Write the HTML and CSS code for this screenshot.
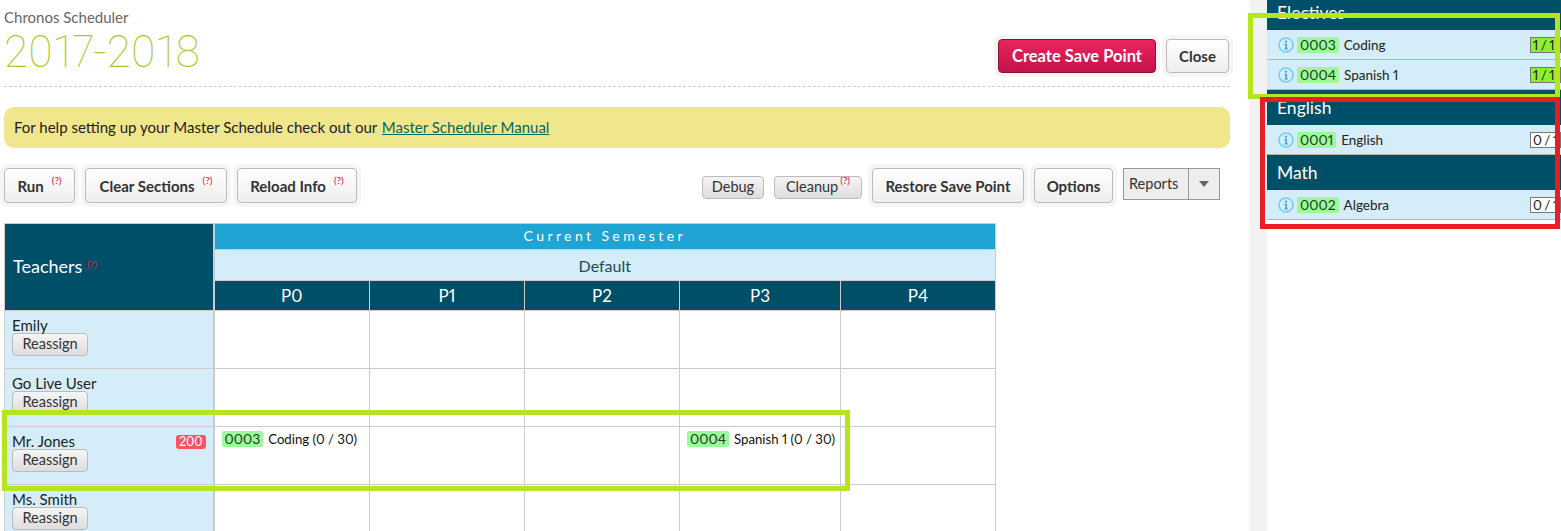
FILE: index.html
```html
<!DOCTYPE html>
<html lang="en">
<head>
<meta charset="utf-8">
<title>Chronos Scheduler</title>
<link rel="stylesheet" href="styles.css">
</head>
<body>
<div class="page">
  <main class="main">
    <header class="head">
      <div class="head-titles">
        <div class="app-name">Chronos Scheduler</div>
        <h1 class="year">2017-2018</h1>
      </div>
      <div class="head-actions">
        <button class="btn btn-primary btn-save">Create Save Point</button>
        <button class="btn btn-close">Close</button>
      </div>
    </header>
    <div class="notice">For help setting up your Master Schedule check out our <a class="notice-link" href="#">Master Scheduler Manual</a></div>
    <div class="toolbar">
      <div class="toolbar-group">
        <button class="btn btn-run">Run<sup class="help">(?)</sup></button>
        <button class="btn btn-clear">Clear Sections<sup class="help">(?)</sup></button>
        <button class="btn btn-reload">Reload Info<sup class="help">(?)</sup></button>
      </div>
      <div class="toolbar-group toolbar-right">
        <button class="mini mini-debug">Debug</button>
        <button class="mini mini-cleanup">Cleanup<sup class="help">(?)</sup></button>
        <button class="btn btn-restore">Restore Save Point</button>
        <button class="btn btn-options">Options</button>
        <div class="split"><span class="split-label">Reports</span><span class="split-arrow"><span class="caret"></span></span></div>
      </div>
    </div>
    <table class="grid">
      <colgroup>
        <col class="c-teacher"><col class="c-p0"><col class="c-p"><col class="c-p"><col class="c-p3"><col class="c-p">
      </colgroup>
      <thead>
        <tr class="r-sem">
          <th class="th-teachers" rowspan="3">Teachers <sup class="help help-lg">(?)</sup></th>
          <th class="th-sem" colspan="5">Current Semester</th>
        </tr>
        <tr class="r-def"><th class="th-def" colspan="5">Default</th></tr>
        <tr class="r-per"><th class="th-per">P0</th><th class="th-per">P1</th><th class="th-per">P2</th><th class="th-per">P3</th><th class="th-per">P4</th></tr>
      </thead>
      <tbody>
        <tr>
          <td class="teacher"><div class="t-name">Emily</div><button class="mini reassign">Reassign</button></td>
          <td></td><td></td><td></td><td></td><td></td>
        </tr>
        <tr>
          <td class="teacher"><div class="t-name">Go Live User</div><button class="mini reassign">Reassign</button></td>
          <td></td><td></td><td></td><td></td><td></td>
        </tr>
        <tr>
          <td class="teacher"><div class="t-name"><span>Mr. Jones</span><span class="count">200</span></div><button class="mini reassign">Reassign</button></td>
          <td class="slot"><span class="code">0003</span><span class="slot-text">Coding (0 / 30)</span></td>
          <td></td><td></td>
          <td class="slot"><span class="code">0004</span><span class="slot-text">Spanish 1 (0 / 30)</span></td>
          <td></td>
        </tr>
        <tr>
          <td class="teacher"><div class="t-name">Ms. Smith</div><button class="mini reassign">Reassign</button></td>
          <td></td><td></td><td></td><td></td><td></td>
        </tr>
      </tbody>
    </table>
  </main>
  <div class="gutter"></div>
  <aside class="side">
    <h2 class="side-head side-head-first">Electives</h2>
    <div class="course">
      <svg class="info" viewBox="0 0 16 16"><circle cx="8" cy="8" r="7" fill="none" stroke="#74ccf8" stroke-width="1.6"/><circle cx="8" cy="4.6" r="1.2" fill="#3fa3e0"/><path d="M6.4 6.8h2.6v4.6h1v1.1H6.3v-1.1h1V7.9h-.9z" fill="#3fa3e0"/></svg>
      <span class="code">0003</span><span class="course-name">Coding</span><span class="tally tally-done">1 / 1</span>
    </div>
    <div class="course">
      <svg class="info" viewBox="0 0 16 16"><circle cx="8" cy="8" r="7" fill="none" stroke="#74ccf8" stroke-width="1.6"/><circle cx="8" cy="4.6" r="1.2" fill="#3fa3e0"/><path d="M6.4 6.8h2.6v4.6h1v1.1H6.3v-1.1h1V7.9h-.9z" fill="#3fa3e0"/></svg>
      <span class="code">0004</span><span class="course-name">Spanish 1</span><span class="tally tally-done">1 / 1</span>
    </div>
    <h2 class="side-head">English</h2>
    <div class="course">
      <svg class="info" viewBox="0 0 16 16"><circle cx="8" cy="8" r="7" fill="none" stroke="#74ccf8" stroke-width="1.6"/><circle cx="8" cy="4.6" r="1.2" fill="#3fa3e0"/><path d="M6.4 6.8h2.6v4.6h1v1.1H6.3v-1.1h1V7.9h-.9z" fill="#3fa3e0"/></svg>
      <span class="code">0001</span><span class="course-name">English</span><span class="tally">0 / 1</span>
    </div>
    <h2 class="side-head">Math</h2>
    <div class="course">
      <svg class="info" viewBox="0 0 16 16"><circle cx="8" cy="8" r="7" fill="none" stroke="#74ccf8" stroke-width="1.6"/><circle cx="8" cy="4.6" r="1.2" fill="#3fa3e0"/><path d="M6.4 6.8h2.6v4.6h1v1.1H6.3v-1.1h1V7.9h-.9z" fill="#3fa3e0"/></svg>
      <span class="code">0002</span><span class="course-name">Algebra</span><span class="tally">0 / 1</span>
    </div>
  </aside>
  <div class="mark mark-row"></div>
  <div class="mark mark-side-green"></div>
  <div class="mark mark-side-red"></div>
</div>
</body>
</html>
```
FILE: styles.css
```css
* { box-sizing: border-box; }
html, body { margin: 0; padding: 0; height: 100%; overflow: hidden; background: #fff; }
body { font-family: Lato, "Open Sans", "Liberation Sans", sans-serif; font-size: 14px; color: #222; font-variant-numeric: proportional-nums; }
.page { position: relative; display: flex; width: 1561px; height: 531px; overflow: hidden; }
.main { width: 1250px; flex: none; padding: 0 20px 0 4px; }
.gutter { width: 17px; flex: none; background: #f2f2f2; }
.side { width: 294px; flex: none; overflow: hidden; }

.head { display: flex; justify-content: space-between; align-items: flex-start; height: 87px; border-bottom: 1px dashed #ccc; padding-top: 9px; }
.app-name { font-size: 15px; line-height: 17px; color: #666; }
.year { margin: 4px 0 0; font-family: Roboto, "Liberation Serif", serif; font-weight: 100; font-size: 44px; line-height: 44px; color: #a9c82a; }
.head-actions { display: flex; gap: 10px; padding-top: 30px; padding-right: 1px; }

.btn { height: 35px; padding: 0; border: 1px solid #bbb; border-radius: 4px; background: linear-gradient(#fff, #eee); box-shadow: 0 0 0 4px #f5f5f5; font-family: Lato, sans-serif; font-size: 15px; font-weight: 700; color: #333; white-space: nowrap; }
.btn-primary { border-color: #8c1238; background: linear-gradient(#e8265e, #c5124c); color: #fff; font-size: 16.5px; }
.btn-save { width: 158px; height: 34px; }
.btn-close { width: 63px; height: 34px; }
.btn-run { width: 71px; }
.btn-clear { width: 142px; }
.btn-reload { width: 120px; }
.btn-restore { width: 152px; }
.btn-options { width: 79px; }

.help { font-size: 10px; font-weight: 400; color: #f00c2c; margin-left: 8px; position: relative; top: -2px; vertical-align: super; line-height: 0; }
.help-lg { margin-left: 0; top: 2px; }

.notice { margin-top: 20px; height: 41px; line-height: 40px; padding-left: 10px; background: #f0e68c; border-radius: 10px; font-size: 15px; color: #222; width: 1226px; }
.notice-link { color: #00695c; margin-left: 1px; }

.toolbar { display: flex; justify-content: space-between; margin-top: 20px; height: 35px; width: 1216px; }
.toolbar-group { display: flex; gap: 10px; }
.toolbar-right { align-items: flex-start; }

.mini { height: 23px; padding: 0 0 2px; border: 1px solid #bbb; border-radius: 4px; background: linear-gradient(#f5f5f5, #ddd); font-family: Lato, sans-serif; font-size: 14.5px; color: #333; white-space: nowrap; }
.mini-debug { width: 62px; margin-top: 8px; }
.mini-cleanup { width: 88px; margin-top: 8px; }
.mini-cleanup .help { margin-left: 2px; }

.split { display: flex; width: 97px; height: 32px; border: 1px solid #999; background: #eee; font-size: 14.5px; }
.split-label { width: 65px; padding-left: 5px; line-height: 29px; border-right: 1px solid #999; color: #333; }
.split-arrow { flex: 1; display: flex; align-items: center; justify-content: center; }
.caret { width: 0; height: 0; border-left: 5px solid transparent; border-right: 5px solid transparent; border-top: 6px solid #666; }

.grid { margin-top: 20px; border-collapse: collapse; table-layout: fixed; width: 992px; }
.c-teacher { width: 209px; }
.c-p0 { width: 156px; }
.c-p { width: 155px; }
.c-p3 { width: 161px; }
.grid th, .grid td { border: 1px solid #ccc; padding: 0; font-weight: 400; }
.r-sem { height: 26px; }
.r-def { height: 31px; }
.r-per { height: 30px; }
.th-teachers { background: #004f68; color: #fff; text-align: left; padding: 0 0 3px 8px !important; font-size: 18px; border-right-width: 2px !important; }
.th-sem { background: #1fa5d4; color: #fff; font-size: 14px; letter-spacing: 3.4px; padding-bottom: 2px !important; }
.th-def { background: #d5edf8; color: #1f4a5c; font-size: 16px; }
.th-per { background: #004f68; color: #fff; font-size: 17px; }
.grid tbody tr { height: 58px; }
.grid td { vertical-align: top; }
.teacher { background: #d5edf8; padding: 6px 7px 0 7px !important; border-right-width: 2px !important; }
.t-name { display: flex; justify-content: space-between; align-items: center; height: 16px; line-height: 16px; font-size: 15px; color: #222; }
.reassign { display: block; width: 76px; }
.count { background: #f9545f; color: #fff; border-radius: 3px; font-size: 12.5px; line-height: 14px; padding: 0 3px; margin-top: 1px; }
.slot { padding: 4px 7px 0 !important; white-space: nowrap; font-size: 13.2px; }
.code { display: inline-block; height: 16px; line-height: 15px; background: #9cf99c; border-radius: 2px; padding: 0 3px; font-size: 14px; color: #1f3d1f; }
.slot-text { margin-left: 5px; color: #111; }

.side-head { margin: 0; height: 35px; background: #004f68; color: #fff; font-size: 17.5px; font-weight: 400; line-height: 35px; padding-left: 10px; }
.side-head-first { margin-top: -5px; }
.course { display: flex; align-items: center; height: 30px; background: #d5edf8; border-bottom: 1px solid #b4b4b4; padding-left: 11px; }
.info { width: 16px; height: 16px; flex: none; margin-right: 3px; }
.course-name { margin-left: 5px; font-size: 13.5px; color: #222; }
.tally { margin-left: auto; width: 31px; flex: none; height: 16px; line-height: 14px; border: 1px solid #777; background: #fff; padding-left: 2px; font-size: 13.5px; word-spacing: -1px; white-space: nowrap; }
.tally-done { background: #8df02c; }

.mark { position: absolute; border-style: solid; border-width: 5px; pointer-events: none; }
.mark-row { left: 2px; top: 410px; width: 848px; height: 81px; border-color: #b5e61d; }
.mark-side-green { left: 1248px; top: 13px; width: 312px; height: 86px; border-color: #b5e61d; }
.mark-side-red { left: 1260px; top: 97px; width: 300px; height: 132px; border-color: #ed1c24; }
```
